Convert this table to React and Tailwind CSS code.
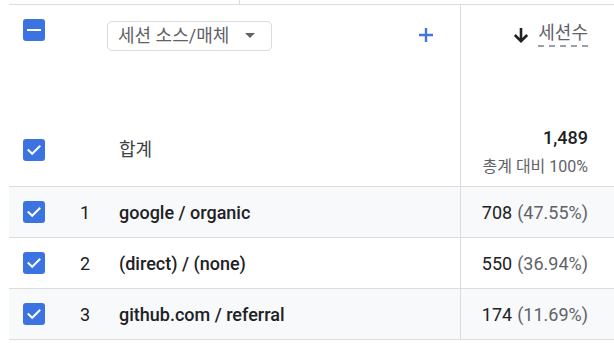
const FONT = { fontFamily: "Roboto, 'Noto Sans CJK KR', sans-serif" };

const ROWS = [
  { n: 1, name: 'google / organic', value: '708', pct: '(47.55%)' },
  { n: 2, name: '(direct) / (none)', value: '550', pct: '(36.94%)' },
  { n: 3, name: 'github.com / referral', value: '174', pct: '(11.69%)' },
];

function Checkbox({ mixed }) {
  return (
    <div className="w-[22px] h-[22px] rounded-[3px] bg-[#3b74e1] flex items-center justify-center shrink-0">
      {mixed ? (
        <div className="w-[14px] h-[2px] bg-white" />
      ) : (
        <svg width="16" height="16" viewBox="0 0 16 16" fill="none">
          <path d="M2.5 8.2 L6.2 11.8 L13.5 4.5" stroke="white" strokeWidth="2" strokeLinecap="square" />
        </svg>
      )}
    </div>
  );
}

export default function App() {
  return (
    <div className="w-[614px] h-[343px] overflow-hidden bg-white pl-[9px]" style={FONT}>
      <div className="h-[4px] flex">
        <div className="w-[230px]" />
        <div className="w-px bg-[#dadce0]" />
      </div>
      {/* header */}
      <div className="flex h-[183px] border-t border-b border-[#dadce0]">
        <div className="w-[451px] flex flex-col">
          <div className="flex items-start pt-[14px]">
            <div className="pl-[14px]">
              <Checkbox mixed />
            </div>
            <div className="ml-[62px] mt-[2px] w-[165px] h-[30px] border border-[#dadce0] rounded-[5px] flex items-center pl-[10px] pr-[16px] justify-between">
              <span className="text-[18px] text-[#5f6368] leading-none">세션 소스/매체</span>
              <svg width="10" height="6" viewBox="0 0 10 6"><path d="M0 0 L10 0 L5 5 Z" fill="#5f6368" /></svg>
            </div>
            <div className="ml-auto mr-[26px] mt-[8px]">
              <svg width="16" height="16" viewBox="0 0 16 16"><path d="M8 1 V15 M1 8 H15" stroke="#4274e2" strokeWidth="2.4" /></svg>
            </div>
          </div>
          <div className="mt-auto mb-[23px] flex items-center">
            <div className="pl-[14px]">
              <Checkbox />
            </div>
            <span className="ml-[74px] text-[18px] text-[#3c4043]">합계</span>
          </div>
        </div>
        <div className="flex-1 border-l border-[#dadce0] flex flex-col items-end pr-[26px]">
          <div className="flex items-center gap-[9px] pt-[18px]">
            <svg className="shrink-0" width="16" height="16" viewBox="0 0 16 16"><path d="M8 1 V14 M1.8 8 L8 14.2 L14.2 8" stroke="#202124" strokeWidth="2.6" fill="none" /></svg>
            <span className="text-[18px] text-[#5f6368] leading-[20px] border-b-2 border-dashed border-[#9aa0a6] pb-[2px]">세션수</span>
          </div>
          <div className="mt-auto mb-[9px] flex flex-col items-end">
            <span className="text-[18px] font-medium text-[#202124] leading-[20px]">1,489</span>
            <span className="mt-[9px] text-[16px] text-[#5f6368] leading-[20px]">총계 대비 100%</span>
          </div>
        </div>
      </div>
      {ROWS.map((r, i) => (
        <div key={r.n} className={`flex h-[51px] border-b border-[#dadce0] ${i % 2 === 0 ? 'bg-[#f8f9fa]' : 'bg-white'}`}>
          <div className="w-[451px] flex items-center">
            <div className="pl-[14px]">
              <Checkbox />
            </div>
            <span className="ml-[35px] w-[39px] text-[18px] text-[#202124]">{r.n}</span>
            <span className="text-[18px] font-medium text-[#202124]">{r.name}</span>
          </div>
          <div className="flex-1 border-l border-[#dadce0] flex items-center justify-end pr-[26px] text-[18px]">
            <span className="text-[#202124]">{r.value}</span>
            <span className="ml-[5px] text-[#5f6368]">{r.pct}</span>
          </div>
        </div>
      ))}
    </div>
  );
}
